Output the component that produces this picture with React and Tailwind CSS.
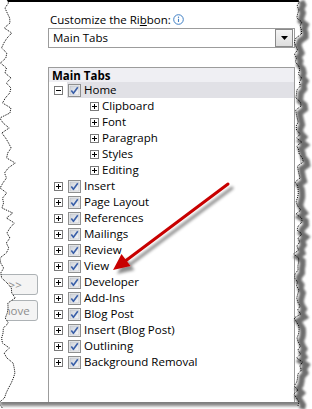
import React from 'react';

const FONT = { fontFamily: '"Open Sans", "Noto Sans", Arial, sans-serif' };

const rows = [
  { label: 'Home', level: 0, open: true, active: true },
  { label: 'Clipboard', level: 1 },
  { label: 'Font', level: 1 },
  { label: 'Paragraph', level: 1 },
  { label: 'Styles', level: 1 },
  { label: 'Editing', level: 1 },
  { label: 'Insert', level: 0 },
  { label: 'Page Layout', level: 0 },
  { label: 'References', level: 0 },
  { label: 'Mailings', level: 0 },
  { label: 'Review', level: 0 },
  { label: 'View', level: 0 },
  { label: 'Developer', level: 0 },
  { label: 'Add-Ins', level: 0 },
  { label: 'Blog Post', level: 0 },
  { label: 'Insert (Blog Post)', level: 0 },
  { label: 'Outlining', level: 0 },
  { label: 'Background Removal', level: 0 },
];

// deterministic jagged edge for the torn screenshot borders
const jagged = (base, amp, seed, height, step = 4) => {
  let s = seed;
  const rnd = () => {
    s = (s * 9301 + 49297) % 233280;
    return s / 233280;
  };
  const pts = [];
  for (let y = -2; y <= height + 2; y += step) {
    pts.push([base + (rnd() - 0.5) * 2 * amp + Math.sin(y * 0.09) * amp * 0.6, y]);
  }
  return pts;
};

const Expander = ({ open }) => (
  <svg width="9" height="9" viewBox="0 0 9 9" className="shrink-0">
    <rect x="0.5" y="0.5" width="8" height="8" fill="#fff" stroke="#7a7a7a" />
    <path d="M2 4.5h5" stroke="#000" />
    {!open && <path d="M4.5 2v5" stroke="#000" />}
  </svg>
);

const CheckBox = () => (
  <svg width="13" height="13" viewBox="0 0 13 13" className="shrink-0">
    <defs>
      <linearGradient id="cbfill" x1="0" y1="0" x2="1" y2="1">
        <stop offset="0" stopColor="#cdd1d8" />
        <stop offset="1" stopColor="#f7f7f8" />
      </linearGradient>
    </defs>
    <rect x="0.5" y="0.5" width="12" height="12" fill="#f4f4f4" stroke="#8e8f8f" />
    <rect x="2" y="2" width="9" height="9" fill="url(#cbfill)" stroke="#b7bcc4" strokeWidth="0.6" />
    <path d="M3.3 6.6 L5.4 9.3 L9.8 3.2" fill="none" stroke="#3a5fa8" strokeWidth="1.6" strokeLinejoin="round" />
  </svg>
);

const InfoIcon = () => (
  <svg width="11" height="11" viewBox="0 0 11 11" className="inline-block ml-[2px] -mt-[2px] align-middle">
    <circle cx="5.5" cy="5.5" r="4.8" fill="#fff" stroke="#3f7fc4" />
    <circle cx="5.5" cy="3.3" r="0.7" fill="#3f7fc4" />
    <path d="M5.5 4.8v3.2" stroke="#3f7fc4" strokeWidth="1.1" />
  </svg>
);

const TreeRow = ({ row }) => {
  if (row.level === 1) {
    return (
      <div className="h-[16px] flex items-center pl-[41px]">
        <Expander />
        <span className="ml-[3px] leading-[16px]">{row.label}</span>
      </div>
    );
  }
  return (
    <div className="h-[16px] flex items-center pl-[5px]">
      <Expander open={row.open} />
      <div className={`ml-[4px] pl-[1px] h-[16px] flex-1 flex items-center ${row.active ? 'bg-[#e1e1e6]' : ''}`}>
        <CheckBox />
        <span className="ml-[3px] leading-[16px]">{row.label}</span>
      </div>
    </div>
  );
};

const LeftEdge = () => {
  const pts = jagged(7, 5.5, 7, 409, 5);
  const line = pts.map((p) => p.join(',')).join(' ');
  return (
    <svg width="22" height="409" className="absolute left-0 top-0">
      <polygon points={`0,-5 ${line} 0,415`} fill="#fff" />
      <polyline points={line} fill="none" stroke="#000" strokeWidth="1" strokeDasharray="1 1" />
    </svg>
  );
};

const RightEdge = () => {
  const pts = jagged(10, 3.5, 31, 404);
  const line = pts.map((p) => p.join(',')).join(' ');
  const shadow = pts.map(([x, y]) => `${x + 4},${y + 3}`).join(' ');
  return (
    <svg width="24" height="409" className="absolute left-[288px] top-0">
      <defs>
        <filter id="blurR" x="-1" y="-1" width="3" height="3">
          <feGaussianBlur stdDeviation="1.3" />
        </filter>
      </defs>
      <polygon points={`${line} 30,410 30,-5`} fill="#fff" />
      <polyline points={shadow} fill="none" stroke="#6e6e6e" strokeWidth="6" filter="url(#blurR)" />
      <polyline points={line} fill="none" stroke="#000" strokeWidth="1" strokeDasharray="1 1" />
    </svg>
  );
};

const Arrow = () => (
  <svg width="312" height="409" className="absolute left-0 top-0 pointer-events-none">
    <defs>
      <filter id="arrowShadow" x="-0.2" y="-0.2" width="1.5" height="1.5">
        <feDropShadow dx="4" dy="4" stdDeviation="1.8" floodColor="#000" floodOpacity="0.45" />
      </filter>
    </defs>
    <g filter="url(#arrowShadow)">
      <path d="M228 184 L124 262" stroke="#c80000" strokeWidth="3" strokeLinecap="round" />
      <polygon points="113,270 130.5,266 121.5,254" fill="#c80000" />
    </g>
  </svg>
);

export default function App() {
  return (
    <div className="relative w-[312px] h-[409px] bg-white overflow-hidden text-[11.5px] text-black" style={FONT}>
      <div className="w-[300px] h-[402px] border-t-2 border-black flex overflow-hidden bg-white shadow-[0_4px_3px_rgba(0,0,0,0.5)]">
        {/* left: Add / Remove buttons, cut by the torn edge */}
        <div className="w-[48px] shrink-0 pt-[272px] flex flex-col gap-[5px]">
          <button className="-ml-[38px] w-[76px] h-[21px] rounded-[3px] border border-[#adb2b5] bg-[#f4f4f4] text-[#8d8d8d] leading-none pl-[6px]">
            Add &gt;&gt;
          </button>
          <button className="-ml-[38px] w-[76px] h-[21px] rounded-[3px] border border-[#adb2b5] bg-[#f4f4f4] text-[#8d8d8d] leading-none">
            &lt;&lt; Remove
          </button>
        </div>

        {/* right: ribbon customisation */}
        <div className="w-[247px] shrink-0 flex flex-col">
          <div className="mt-[10px] h-[15px] leading-[15px] pl-[2px]">
            Customize the Ri<span className="underline">b</span>bon:
            <InfoIcon />
          </div>
          <div className="mt-[1px] h-[20px] border border-[#9c9c9c] flex items-center justify-between pl-[4px] pr-px">
            <span className="leading-[18px]">Main Tabs</span>
            <div className="w-[18px] h-[18px] border border-[#8a8a8a] bg-gradient-to-b from-[#f4f4f4] to-[#dedede] flex items-center justify-center">
              <svg width="7" height="4" viewBox="0 0 7 4">
                <path d="M0 0h7L3.5 4z" fill="#000" />
              </svg>
            </div>
          </div>
          <div className="mt-[19px] flex-1 border border-b-0 border-[#9c9c9c] bg-white flex flex-col">
            <div className="h-[14px] leading-[15px] bg-[#efeff3] pl-[3px] font-bold">Main Tabs</div>
            {rows.map((r) => (
              <TreeRow key={r.label} row={r} />
            ))}
          </div>
        </div>
      </div>
      <LeftEdge />
      <RightEdge />
      <Arrow />
    </div>
  );
}
